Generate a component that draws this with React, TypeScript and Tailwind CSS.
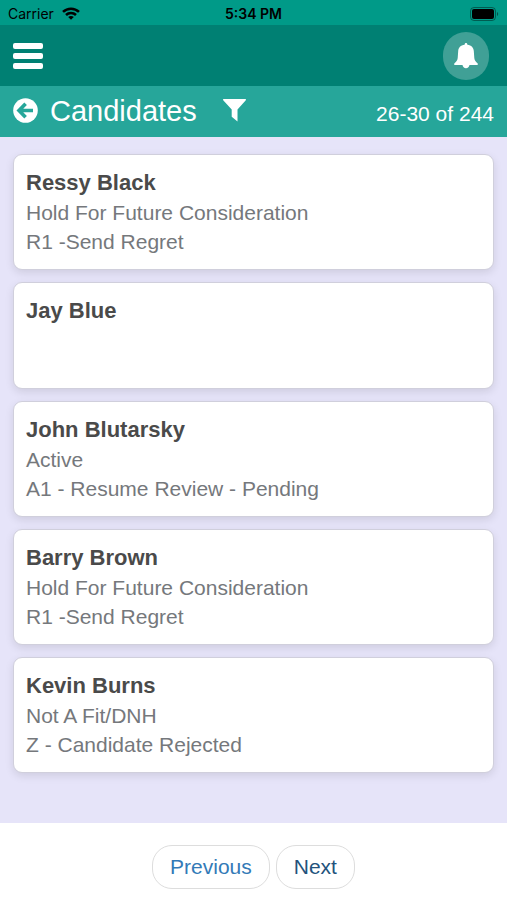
interface Candidate {
  name: string;
  status?: string;
  stage?: string;
}

const candidates: Candidate[] = [
  { name: "Ressy Black", status: "Hold For Future Consideration", stage: "R1 -Send Regret" },
  { name: "Jay Blue" },
  { name: "John Blutarsky", status: "Active", stage: "A1 - Resume Review - Pending" },
  { name: "Barry Brown", status: "Hold For Future Consideration", stage: "R1 -Send Regret" },
  { name: "Kevin Burns", status: "Not A Fit/DNH", stage: "Z - Candidate Rejected" },
];

function StatusBar() {
  return (
    <div className="grid grid-cols-3 items-center h-[25px] px-2 pt-[2px] bg-[#009a88] text-black text-sm font-[Inter,sans-serif]">
      <div className="flex items-center gap-2">
        <span>Carrier</span>
        <svg className="w-[18px] h-[13px]" viewBox="0 0 18 13" fill="none" stroke="currentColor" strokeWidth="2.6">
          <path d="M1 4.900C5.500.6 12.500.6 17 4.900" />
          <path d="M4 8c2.800-2.600 7.200-2.600 10 0" />
          <path d="M9 12.800 6.200 10c1.600-1.400 4-1.400 5.600 0z" fill="currentColor" stroke="none" />
        </svg>
      </div>
      <span className="text-center font-semibold">5:34 PM</span>
      <svg className="justify-self-end w-[29px] h-[14px]" viewBox="0 0 29 14">
        <rect x="0.5" y="0.5" width="25" height="13" rx="3.5" fill="none" stroke="#000" strokeOpacity="0.4" />
        <rect x="2" y="2" width="22" height="10" rx="2" />
        <path d="M27 5c1.600.6 1.600 3.400 0 4z" fillOpacity="0.45" />
      </svg>
    </div>
  );
}

function NavBar() {
  return (
    <nav className="flex items-center justify-between h-[61px] pl-[13px] pr-[18px] bg-[#008073]">
      <button aria-label="Menu" className="flex flex-col gap-1 w-[30px]">
        <span className="h-[6px] rounded-xs bg-white" />
        <span className="h-[6px] rounded-xs bg-white" />
        <span className="h-[6px] rounded-xs bg-white" />
      </button>
      <button
        aria-label="Notifications"
        className="flex items-center justify-center w-[46px] h-12 rounded-full bg-[#40a096] text-white"
      >
        <svg className="w-6 h-[26px]" viewBox="0 0 24 26" fill="currentColor">
          <path d="M12 0c.9 0 1.300.7 1.400 1.700 4 .5 6.200 2.800 6.400 6.300l.5 7c.2 2.200 1.200 3.700 3.200 5.200.5.500.5 1.800-.2 1.800h-7.800c-.3 2-1.600 3.200-3.500 3.200s-3.200-1.200-3.500-3.200H.7c-.7 0-.7-1.300-.2-1.800 2-1.500 3-3 3.200-5.200l.5-7c.2-3.500 2.400-5.800 6.400-6.300C10.700.7 11.100 0 12 0z" />
        </svg>
      </button>
    </nav>
  );
}

function TitleBar() {
  return (
    <header className="flex items-center justify-between h-[51px] px-[13px] bg-[#26a69a] text-white">
      <div className="flex items-center pb-[2px]">
        <button aria-label="Back">
          <svg className="w-[25px] h-[25px]" viewBox="0 0 25 25">
            <circle cx="12.5" cy="12.5" r="12.3" fill="currentColor" />
            <path
              d="M12.600 5.700 6 12.500l6.600 6.800M6.500 12.500H20"
              fill="none"
              stroke="#26a69a"
              strokeWidth="3.6"
            />
          </svg>
        </button>
        <h1 className="ml-3 text-[29px] leading-9">Candidates</h1>
        <button aria-label="Filter" className="ml-[26px]">
          <svg className="w-[23px] h-[23px]" viewBox="0 0 23 23" fill="currentColor">
            <path d="M.6 0h21.800c.6 0 .8.700.4 1.200L14.500 10.500V22.500L8.700 17.800V10.500L.2 1.200C-.2.700 0 0 .6 0z" />
          </svg>
        </button>
      </div>
      <span className="text-[21px] leading-6 pt-1">26-30 of 244</span>
    </header>
  );
}

function CandidateCard({ name, status, stage }: Candidate) {
  return (
    <li className="min-h-[107px] px-3 py-[13px] rounded-[9px] bg-white border border-[#d0cfdc] shadow-[0_3px_8px_rgba(0,0,0,0.1)]">
      <h2 className="text-[22px] leading-[30px] font-bold text-[#4a4a4a]">{name}</h2>
      {status && <p className="text-[21px] leading-[29px] text-[#75787c]">{status}</p>}
      {stage && <p className="text-[21px] leading-[29px] text-[#75787c]">{stage}</p>}
    </li>
  );
}

export default function App() {
  return (
    <div className="flex flex-col min-h-screen bg-white font-['Liberation_Sans',Arial,sans-serif]">
      <StatusBar />
      <NavBar />
      <TitleBar />
      <main className="grow px-[13px] pt-[17px] pb-12 bg-[#e6e4f9]">
        <ul className="flex flex-col gap-3">
          {candidates.map((c) => (
            <CandidateCard key={c.name} {...c} />
          ))}
        </ul>
      </main>
      <footer className="flex justify-center gap-[6px] pt-[22px] pb-[11px] text-[21px] leading-[42px]">
        <button className="px-[17px] rounded-[20px] border border-[#dddddd] text-[#337ab7]">Previous</button>
        <button className="px-[17px] rounded-[20px] border border-[#dddddd] text-[#23527c]">Next</button>
      </footer>
    </div>
  );
}
